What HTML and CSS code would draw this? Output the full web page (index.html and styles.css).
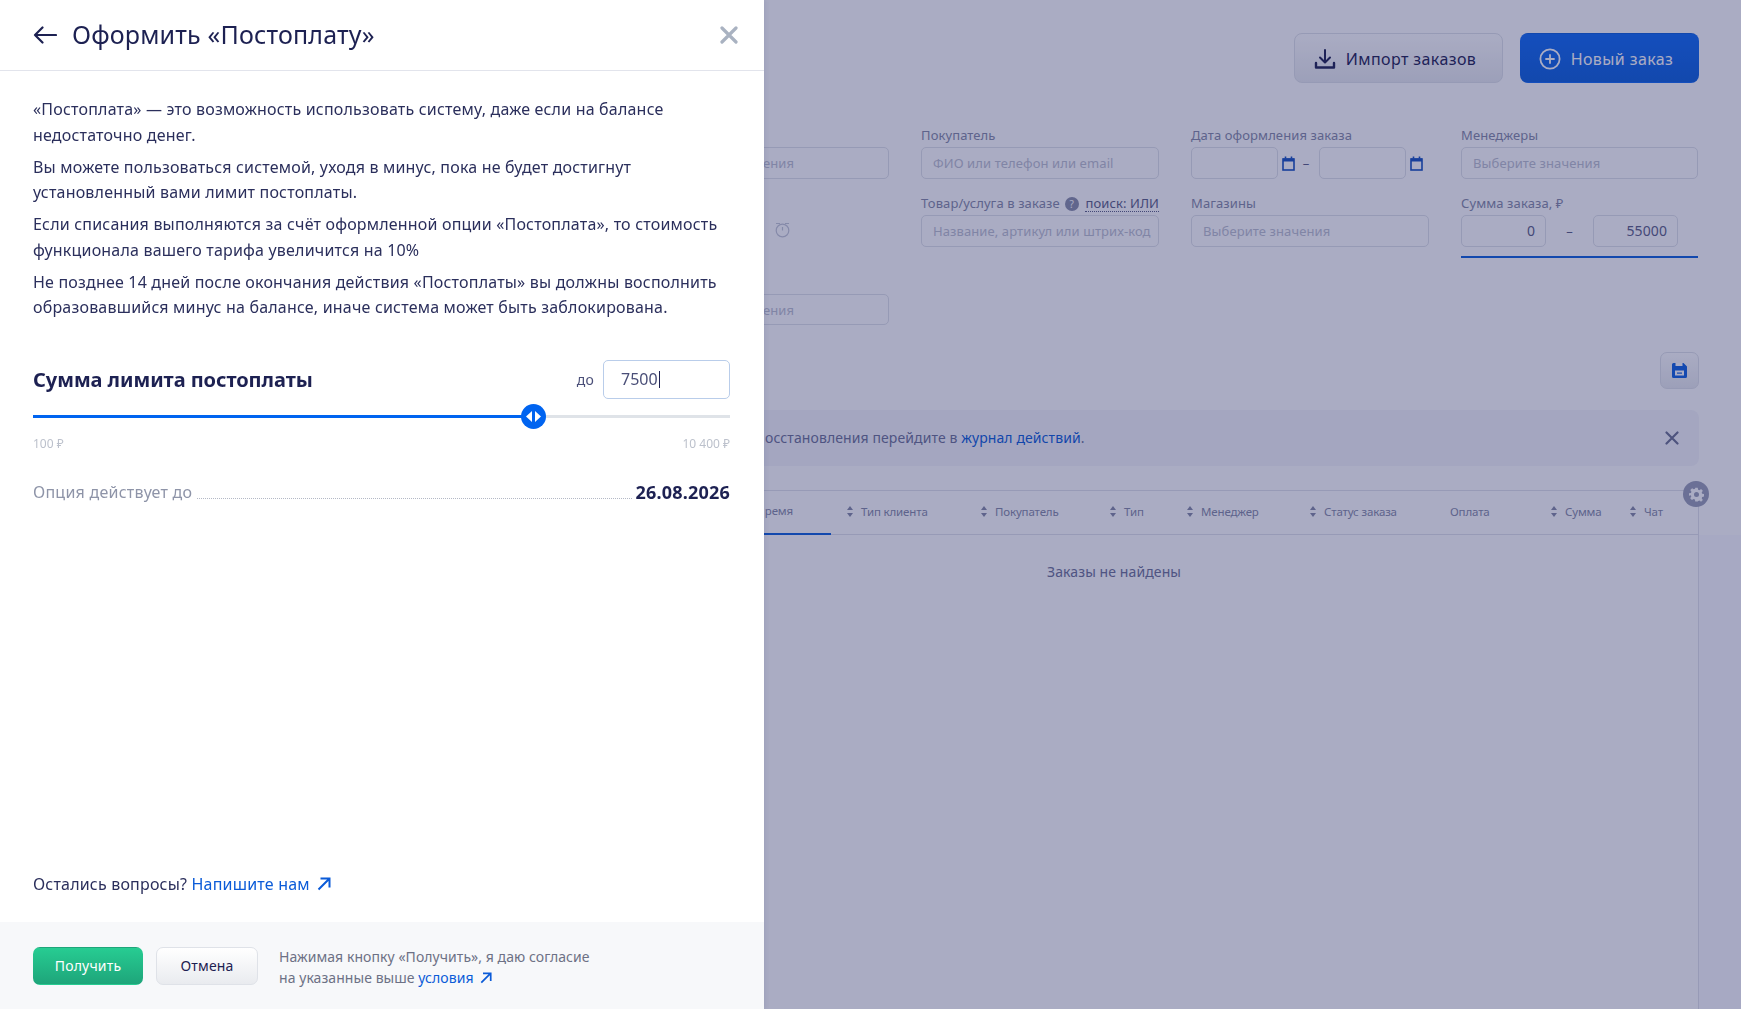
FILE: index.html
```html
<!DOCTYPE html>
<html lang="ru">
<head>
    <meta charset="UTF-8">
    <title>Оформить «Постоплату»</title>
    <link rel="stylesheet" href="styles.css">
</head>
<body>
    <!-- Страница заказов под затемнением -->
    <div class="page">
        <div class="page-actions">
            <button class="btn btn-light btn-big">
                <svg width="22" height="22" viewBox="0 0 22 22" fill="none" stroke="#1d2152" stroke-width="2" stroke-linecap="round" stroke-linejoin="round"><path d="M11 2v12M6 9.5l5 5 5-5"/><path d="M2 15v4.5h18V15" stroke-width="2.4"/></svg>
                Импорт заказов
            </button>
            <button class="btn btn-blue btn-big">
                <svg width="22" height="22" viewBox="0 0 22 22" fill="none" stroke="#fff" stroke-width="1.8" stroke-linecap="round"><circle cx="11" cy="11" r="9.6"/><path d="M11 7v8M7 11h8"/></svg>
                Новый заказ
            </button>
        </div>

        <div class="filters">
            <div class="filter">
                <label>&nbsp;</label>
                <div class="field field-cut">ения</div>
            </div>
            <div class="filter">
                <label>Покупатель</label>
                <div class="field">ФИО или телефон или email</div>
            </div>
            <div class="filter">
                <label>Дата оформления заказа</label>
                <div class="date-range">
                    <div class="field field-date"></div>
                    <svg class="cal" width="13" height="15" viewBox="0 0 13 15" fill="none" stroke="#1450c0" stroke-width="1.6"><rect x="1" y="3" width="11" height="11"/><path d="M1 4h11" stroke-width="3"/><path d="M3.5 0.5v2M9.5 0.5v2"/></svg>
                    <span class="dash">–</span>
                    <div class="field field-date"></div>
                    <svg class="cal" width="13" height="15" viewBox="0 0 13 15" fill="none" stroke="#1450c0" stroke-width="1.6"><rect x="1" y="3" width="11" height="11"/><path d="M1 4h11" stroke-width="3"/><path d="M3.5 0.5v2M9.5 0.5v2"/></svg>
                </div>
            </div>
            <div class="filter">
                <label>Менеджеры</label>
                <div class="field">Выберите значения</div>
            </div>

            <div class="filter filter-clock">
                <svg width="17" height="17" viewBox="0 0 17 17" fill="none" stroke="#c4c8d6" stroke-width="1.2"><circle cx="8.5" cy="9.5" r="6.3"/><path d="M8.5 6v3.5"/><path d="M2 2.5h4M11 2.5h4"/></svg>
            </div>
            <div class="filter">
                <label class="label-search">
                    Товар/услуга в заказе
                    <span class="help">?</span>
                    <span class="search-mode">поиск: ИЛИ</span>
                </label>
                <div class="field">Название, артикул или штрих-код</div>
            </div>
            <div class="filter">
                <label>Магазины</label>
                <div class="field">Выберите значения</div>
            </div>
            <div class="filter">
                <label>Сумма заказа, ₽</label>
                <div class="sum-range">
                    <div class="field field-sum">0</div>
                    <span class="dash">–</span>
                    <div class="field field-sum">55000</div>
                </div>
                <div class="sum-line"></div>
            </div>

            <div class="filter">
                <label>&nbsp;</label>
                <div class="field field-cut field-low">ения</div>
            </div>
        </div>

        <div class="save-row">
            <button class="btn btn-light btn-save">
                <svg width="17" height="17" viewBox="0 0 17 17"><path fill="#0d5fe0" d="M1 2.5A1.5 1.5 0 0 1 2.5 1h10L16 4.5v10a1.5 1.5 0 0 1-1.5 1.5h-12A1.5 1.5 0 0 1 1 14.5z"/><rect x="4.5" y="1" width="7" height="3" fill="#fff"/><rect x="4" y="8.5" width="9" height="5" fill="#fff"/><rect x="6" y="10.5" width="5" height="1.2" fill="#0d5fe0"/></svg>
            </button>
        </div>

        <div class="notice">
            <span>осстановления перейдите в <a href="#">журнал действий</a>.</span>
            <svg class="notice-close" width="14" height="14" viewBox="0 0 14 14" stroke="#6b7090" stroke-width="2.2" stroke-linecap="round"><path d="M1.5 1.5l11 11M12.5 1.5l-11 11"/></svg>
        </div>

        <div class="orders">
            <span class="gear">
                <svg width="15" height="15" viewBox="0 0 24 24" fill="#fff"><path fill-rule="evenodd" d="M10 1h4l.6 3.2 2 .8 2.7-1.8 2.8 2.8-1.8 2.7.8 2 3.2.6v4l-3.2.6-.8 2 1.8 2.7-2.8 2.8-2.7-1.8-2 .8L14 23h-4l-.6-3.2-2-.8-2.7 1.8-2.8-2.8 1.8-2.7-.8-2L-.1 14v-4l3.2-.6.8-2-1.8-2.7 2.8-2.8 2.7 1.8 2-.8zM12 8a4 4 0 1 0 0 8 4 4 0 0 0 0-8z"/></svg>
            </span>
            <div class="orders-head">
                <div class="col-time"><span class="col-time-name">ремя</span></div>
                <div class="col"><i class="sort"></i>Тип клиента</div>
                <div class="col"><i class="sort"></i>Покупатель</div>
                <div class="col"><i class="sort"></i>Тип</div>
                <div class="col"><i class="sort"></i>Менеджер</div>
                <div class="col"><i class="sort"></i>Статус заказа</div>
                <div class="col">Оплата</div>
                <div class="col"><i class="sort"></i>Сумма</div>
                <div class="col"><i class="sort"></i>Чат</div>
            </div>
            <div class="orders-empty">Заказы не найдены</div>
        </div>
    </div>

    <div class="overlay"></div>

    <!-- Боковая панель -->
    <aside class="drawer">
        <header class="drawer-head">
            <svg class="back" width="24" height="18" viewBox="0 0 24 18" fill="none" stroke="#1d2152" stroke-width="2.2" stroke-linecap="round" stroke-linejoin="round"><path d="M23 9H2M9.5 1.5L2 9l7.5 7.5"/></svg>
            <h1>Оформить «Постоплату»</h1>
            <svg class="close" width="18" height="18" viewBox="0 0 18 18" stroke="#a9b2c1" stroke-width="3.2" stroke-linecap="round"><path d="M2 2l14 14M16 2L2 16"/></svg>
        </header>

        <div class="drawer-body">
            <p>«Постоплата» — это возможность использовать систему, даже если на балансе недостаточно денег.</p>
            <p>Вы можете пользоваться системой, уходя в минус, пока не будет достигнут установленный вами лимит постоплаты.</p>
            <p>Если списания выполняются за счёт оформленной опции «Постоплата», то стоимость функционала вашего тарифа увеличится на 10%</p>
            <p>Не позднее 14 дней после окончания действия «Постоплаты» вы должны восполнить образовавшийся минус на балансе, иначе система может быть заблокирована.</p>

            <div class="limit-head">
                <h2>Сумма лимита постоплаты</h2>
                <span class="limit-to">до</span>
                <div class="limit-input">7500<span class="caret"></span></div>
            </div>

            <div class="slider">
                <div class="slider-fill" style="width: 71.8%"></div>
                <span class="slider-thumb" style="left: 71.8%">
                    <svg width="15" height="11" viewBox="0 0 15 11" fill="#fff"><path d="M6 0v11L0 5.5zM9 0v11l6-5.5z"/></svg>
                </span>
            </div>
            <div class="slider-labels">
                <span>100 ₽</span>
                <span>10 400 ₽</span>
            </div>

            <div class="option-row">
                <span class="option-name">Опция действует до</span>
                <span class="option-dots"></span>
                <b class="option-date">26.08.2026</b>
            </div>

            <div class="questions">
                Остались вопросы? <a href="#">Напишите нам
                <svg class="ext" width="14" height="14" viewBox="0 0 14 14" fill="none" stroke="#0b5bd8" stroke-width="2"><path d="M1.5 12.5L12 2M3.5 1.5H12.5V10.5"/></svg></a>
            </div>
        </div>

        <footer class="drawer-foot">
            <button class="btn btn-green">Получить</button>
            <button class="btn btn-light btn-cancel">Отмена</button>
            <div class="terms">
                Нажимая кнопку «Получить», я даю согласие<br>
                на указанные выше <a href="#">условия
                <svg class="ext" width="12" height="12" viewBox="0 0 14 14" fill="none" stroke="#0b5bd8" stroke-width="2"><path d="M1.5 12.5L12 2M3.5 1.5H12.5V10.5"/></svg></a>
            </div>
        </footer>
    </aside>
</body>
</html>
```

FILE: styles.css
```css
* {
    box-sizing: border-box;
}

html, body {
    height: 100%;
}

body {
    margin: 0;
    overflow: hidden;
    font-family: "Noto Sans", "Open Sans", sans-serif;
    font-size: 16px;
    color: #1d2152;
    background: linear-gradient(to bottom, #fff 535px, #fbfbff 535px);
}

a {
    color: #0b5bd8;
    text-decoration: none;
}

.btn {
    display: inline-flex;
    align-items: center;
    justify-content: center;
    border: 1px solid transparent;
    border-radius: 7px;
    font-family: inherit;
    font-size: 14px;
    letter-spacing: 0.2px;
}

.btn-light {
    background: linear-gradient(#fff, #e9ebef);
    border-color: #dfe2e8;
    color: #1d2152;
}

.btn-blue {
    background: linear-gradient(#0e69f5, #0b5edc);
    color: #fff;
}

.btn-green {
    width: 110px;
    height: 38px;
    background: linear-gradient(#27cc92, #1ea57a);
    color: #fff;
}

.btn-cancel {
    width: 102px;
    height: 38px;
}

.btn-big {
    height: 50px;
    gap: 10px;
    padding: 1px 7px 0 0;
    font-size: 16px;
    letter-spacing: 0.4px;
    border-radius: 8px;
}

/* Страница */

.page {
    width: 1741px;
    padding: 33px 42px 0 0;
}

.page-actions {
    display: flex;
    justify-content: flex-end;
    gap: 17px;
    height: 50px;
}

.page-actions .btn-light {
    width: 209px;
}

.page-actions .btn-blue {
    width: 179px;
}

.filters {
    display: grid;
    grid-template-columns: 238px 238px 238px 237px;
    column-gap: 32px;
    row-gap: 17px;
    margin: 45px 0 0 651px;
}

.filter label {
    display: block;
    height: 19px;
    font-size: 13px;
    line-height: 15px;
    letter-spacing: 0.1px;
    color: #858aa6;
    white-space: nowrap;
}

.field {
    height: 32px;
    padding: 0 11px;
    border: 1px solid #dfe2e8;
    border-radius: 5px;
    font-size: 13px;
    line-height: 30px;
    letter-spacing: 0.1px;
    color: #bcc0cf;
    white-space: nowrap;
    overflow: hidden;
}

/* начало значения закрыто панелью */
.field-cut {
    padding-left: 111px;
}

.field-low {
    height: 31px;
}

.date-range, .sum-range {
    display: flex;
    align-items: center;
}

.field-date {
    width: 87px;
}

.cal {
    margin: 0 5px 0 4px;
    flex: none;
}

.dash {
    width: 12px;
    text-align: center;
    font-size: 13px;
    color: #5a5e85;
}

.date-range .dash {
    margin-right: 7px;
}

.field-sum {
    width: 85px;
    text-align: right;
    padding: 0 10px 0 6px;
    font-size: 14px;
    color: #5a5e85;
}

.sum-range .dash {
    width: 47px;
}

.sum-line {
    height: 2px;
    margin-top: 9px;
    background: #0b5edc;
}

.filter-clock {
    display: flex;
    justify-content: flex-end;
    align-items: center;
    padding: 4px 98px 0 0;
}

.label-search {
    display: flex !important;
    align-items: flex-start;
    gap: 5px;
}

.help {
    width: 14px;
    height: 14px;
    margin-top: 1px;
    border-radius: 50%;
    background: #8a8fa9;
    color: #fff;
    font-size: 10px;
    line-height: 14px;
    text-align: center;
    letter-spacing: 0;
}

.search-mode {
    margin-left: auto;
    border-bottom: 1px dotted #5a5e85;
    line-height: 15px;
    color: #5a5e85;
}

.save-row {
    display: flex;
    justify-content: flex-end;
    margin-top: 27px;
}

.btn-save {
    width: 39px;
    height: 37px;
}

.notice {
    display: flex;
    align-items: center;
    justify-content: space-between;
    height: 56px;
    margin-top: 21px;
    padding: 0 20px 0 765px;
    border-radius: 8px;
    background: #f5f6fb;
    font-size: 14px;
    letter-spacing: 0.1px;
    line-height: 18px;
    color: #6d7196;
}

.notice span {
    margin-bottom: 1px;
}

.orders {
    position: relative;
    margin-top: 24px;
    height: 519px;
    border-top: 1px solid #e1e3ea;
    border-right: 1px solid #e1e3ea;
    background: #fff;
}

.gear {
    position: absolute;
    top: -10px;
    right: -11px;
    display: flex;
    align-items: center;
    justify-content: center;
    width: 26px;
    height: 26px;
    border-radius: 50%;
    background: #999eb6;
}

.orders-head {
    display: grid;
    grid-template-columns: 849px 134px 129px 77px 123px 138px 103px 79px 1fr;
    height: 44px;
    border-bottom: 1px solid #e1e3ea;
    font-size: 11.5px;
    letter-spacing: -0.15px;
    color: #858aa6;
}

.col {
    display: flex;
    align-items: center;
    padding-bottom: 3px;
    white-space: nowrap;
}

.col-time {
    display: flex;
    justify-content: flex-end;
    padding-right: 18px;
}

.col-time-name {
    width: 67px;
    height: 44px;
    line-height: 40px;
    padding-right: 38px;
    text-align: right;
    white-space: nowrap;
    border-bottom: 2px solid #0b5edc;
}

.sort {
    position: relative;
    width: 6px;
    height: 11px;
    margin: 0 8px 0 -2px;
    flex: none;
}

.sort::before, .sort::after {
    content: "";
    position: absolute;
    left: 0;
    border-left: 3px solid transparent;
    border-right: 3px solid transparent;
}

.sort::before {
    top: 0;
    border-bottom: 4px solid #858aa6;
}

.sort::after {
    bottom: 0;
    border-top: 4px solid #858aa6;
}

.orders-empty {
    padding: 27px 0 0 1047px;
    font-size: 14px;
    letter-spacing: 0.1px;
    color: #6d7196;
}

.overlay {
    position: fixed;
    inset: 0;
    background: rgba(31, 37, 97, 0.38);
}

/* Боковая панель */

.drawer {
    position: fixed;
    top: 0;
    left: 0;
    bottom: 0;
    width: 764px;
    display: flex;
    flex-direction: column;
    background: #fff;
    box-shadow: 2px 0 4px rgba(31, 37, 97, 0.08);
}

.drawer-head {
    display: flex;
    align-items: center;
    gap: 15px;
    height: 71px;
    padding: 0 26px 0 33px;
    border-bottom: 1px solid #e2e4ec;
}

.drawer-head h1 {
    flex: 1;
    margin: 0 0 2px;
    font-size: 25px;
    font-weight: 400;
    letter-spacing: 0.17px;
    color: #1d2152;
}

.drawer-body {
    flex: 1;
    display: flex;
    flex-direction: column;
    padding: 26px 34px 0 33px;
    letter-spacing: 0.19px;
}

.drawer-body p {
    margin: 0 0 6.4px;
    line-height: 1.6;
    color: #2b2f5c;
}

.limit-head {
    display: flex;
    align-items: center;
    margin-top: 33px;
}

.limit-head h2 {
    flex: 1;
    margin: 0;
    font-size: 20px;
    font-weight: 700;
    letter-spacing: -0.05px;
}

.limit-to {
    margin-right: 9px;
    font-size: 14px;
    color: #4a4f78;
}

.limit-input {
    width: 127px;
    height: 39px;
    padding-left: 17px;
    border: 1px solid #b9cdea;
    border-radius: 5px;
    line-height: 37px;
    letter-spacing: 0;
    color: #4a4f78;
}

.caret {
    display: inline-block;
    width: 1px;
    height: 17px;
    margin-left: 1px;
    vertical-align: -3px;
    background: #1d2152;
}

.slider {
    position: relative;
    height: 3px;
    margin-top: 16px;
    background: #dfe3e8;
}

.slider-fill {
    height: 3px;
    background: #0064f0;
}

.slider-thumb {
    position: absolute;
    top: -11px;
    display: flex;
    align-items: center;
    justify-content: center;
    width: 25px;
    height: 25px;
    margin-left: -12px;
    border-radius: 50%;
    background: #0064f0;
}

.slider-labels {
    display: flex;
    justify-content: space-between;
    margin-top: 18px;
    font-size: 12px;
    line-height: 16px;
    letter-spacing: 0;
    color: #bcc1cc;
}

.option-row {
    display: flex;
    align-items: flex-end;
    margin-top: 28px;
    line-height: 24px;
}

.option-name {
    font-size: 16px;
    letter-spacing: 0.25px;
    color: #8e94a8;
}

.option-dots {
    flex: 1;
    margin: 0 4px 5px 5px;
    border-bottom: 1px dotted #b4b9c6;
}

.option-date {
    font-size: 18px;
    font-weight: 700;
    letter-spacing: 0.2px;
}

.questions {
    margin: auto 0 25px;
    line-height: 25px;
    color: #2b2f5c;
}

.ext {
    margin-left: 3px;
    vertical-align: -1px;
}

.drawer-foot {
    display: flex;
    align-items: center;
    gap: 13px;
    height: 87px;
    padding: 0 33px;
    background: #f7f8fa;
}

.terms {
    margin-left: 8px;
    padding-top: 2px;
    font-size: 14px;
    line-height: 21px;
    letter-spacing: 0.06px;
    color: #6d7185;
}
```
